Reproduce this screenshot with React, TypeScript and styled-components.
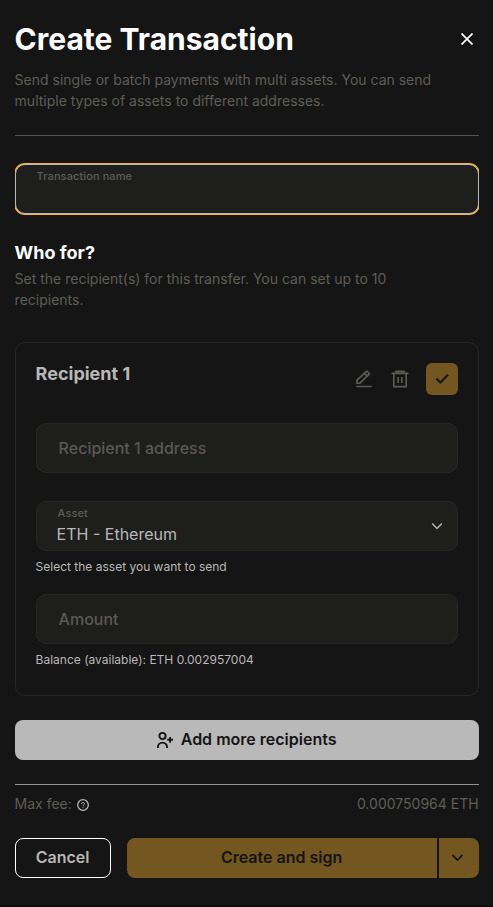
import React from "react";
import styled, { createGlobalStyle, css } from "styled-components";

const GlobalStyle = createGlobalStyle`
  *, *::before, *::after { box-sizing: border-box; }
  body {
    margin: 0;
    background: #100c0e;
    font-family: "Inter", sans-serif;
    -webkit-font-smoothing: antialiased;
  }
  h1, h2, h3, p { margin: 0; }
  button { font-family: inherit; border: 0; padding: 0; cursor: pointer; }
`;

const Drawer = styled.main`
  width: 493px;
  height: 905px;
  padding: 17px 14.4px 0 14.6px;
  background: #151515;
  overflow: hidden;
`;

const Header = styled.header`
  height: 119px;
  border-bottom: 1px solid #535353;
`;

const TitleRow = styled.div`
  display: flex;
  justify-content: space-between;
  align-items: center;
  height: 44px;
`;

const Title = styled.h1`
  font-size: 30px;
  line-height: 44px;
  font-weight: 700;
  color: #fff;
`;

const IconButton = styled.button`
  display: flex;
  align-items: center;
  justify-content: center;
  width: 24px;
  height: 24px;
  background: none;
  color: #5b5b58;
`;

const CloseButton = styled(IconButton)`
  color: #fff;
`;

const Description = styled.p`
  font-size: 14px;
  line-height: 21px;
  color: #5e5d58;
`;

const HeaderDescription = styled(Description)`
  margin-top: 8px;
`;

const FocusFrame = styled.div`
  margin-top: 27px;
  padding: 1px 0;
  overflow: hidden;
`;

const Field = styled.div<{ $focused?: boolean }>`
  position: relative;
  height: 50px;
  border: 1px solid #262626;
  border-radius: 10px;
  background: #1e1e1c;
  ${(p) =>
    p.$focused &&
    css`
      border-color: #b9b9b9;
      box-shadow: 0 0 0 1px #ffb133;
    `}
`;

const FloatingLabel = styled.label<{ $left: number }>`
  position: absolute;
  top: 4px;
  left: ${(p) => p.$left}px;
  font-size: 11px;
  line-height: 14px;
  font-weight: 500;
  letter-spacing: 0.1px;
  color: #5e5d58;
`;

const Placeholder = styled.span`
  display: block;
  padding-left: 22px;
  font-size: 16px;
  font-weight: 500;
  line-height: 49px;
  color: #5a5954;
`;

const SelectValue = styled.div`
  display: flex;
  justify-content: space-between;
  height: 48px;
  padding: 20px 10px 0 20px;
  font-size: 16px;
  line-height: 24px;
  color: #b8b8b8;

  svg { margin-top: -6px; }
`;

const Hint = styled.p`
  margin-top: 7px;
  font-size: 12px;
  line-height: 18px;
  color: #b8b8b8;
`;

const Section = styled.section`
  margin-top: 25px;
`;

const SectionTitle = styled.h2`
  font-size: 18px;
  line-height: 26px;
  font-weight: 700;
  color: #fff;
`;

const SectionDescription = styled(Description)`
  margin-top: 2px;
  width: 400px;
`;

const Card = styled.section`
  height: 354px;
  margin-top: 32px;
  padding: 20px;
  border: 1px solid #262626;
  border-radius: 10px;
`;

const CardHeader = styled.div`
  display: flex;
  justify-content: space-between;
  height: 60px;
`;

const CardTitle = styled.h3`
  font-size: 18px;
  line-height: 22px;
  font-weight: 700;
  color: #b8b8b8;
`;

const Actions = styled.div`
  display: flex;
  align-items: center;
  gap: 12px;
  height: 32px;
`;

const ConfirmButton = styled(IconButton)`
  width: 32px;
  height: 32px;
  margin-left: 2px;
  border-radius: 6px;
  background: #735620;
  color: #151515;
`;

const Fields = styled.div`
  display: flex;
  flex-direction: column;
`;

const FieldGroup = styled.div`
  & + & { margin-top: 28px; }
  & + & + & { margin-top: 18px; }
`;

const Button = styled.button`
  display: flex;
  align-items: center;
  justify-content: center;
  gap: 8px;
  height: 40px;
  padding-bottom: 2px;
  border-radius: 8px;
  font-size: 16px;
  font-weight: 600;
  line-height: 24px;
`;

const AddButton = styled(Button)`
  width: 100%;
  margin-top: 24px;
  background: #b9b9b9;
  color: #151515;

  svg { margin-top: 2px; }
`;

const FeeRow = styled.div`
  display: flex;
  justify-content: space-between;
  height: 54px;
  margin-top: 24px;
  padding-top: 8px;
  border-top: 1px solid #929290;
`;

const FeeLabel = styled(Description)`
  display: flex;
  align-items: center;
  gap: 4px;
  height: 21px;

  svg { margin-top: 2px; color: #b8b8b8; }
`;

const Footer = styled.footer`
  display: flex;
`;

const CancelButton = styled(Button)`
  width: 96px;
  margin-right: 16px;
  border: 1px solid #fff;
  background: transparent;
  color: #b8b8b8;
`;

const SignButton = styled(Button)`
  flex: 1;
  margin-right: 2px;
  border-radius: 8px 0 0 8px;
  background: #735620;
  color: #151515;
`;

const SignMenuButton = styled(Button)`
  width: 40px;
  padding-right: 2px;
  border-radius: 0 8px 8px 0;
  background: #735620;
  color: #151515;
`;

const CloseIcon = () => (
  <svg width="12" height="12" viewBox="0 0 12 12" fill="none" stroke="currentColor" strokeWidth="1.7">
    <path d="M.5.5l11 11M11.5.5l-11 11" />
  </svg>
);

const EditIcon = () => (
  <svg width="20" height="20" viewBox="0 0 20 20" fill="none" stroke="currentColor" strokeWidth="1.65">
    <path d="M3 14.2v-3.1L12.4 2.3a.5.5 0 0 1 .7 0L15.2 4.4a.5.5 0 0 1 0 .7L6 14.2H3zM10.5 4.3l2.7 2.7M2.2 17.5h15.6" />
  </svg>
);

const TrashIcon = () => (
  <svg width="20" height="20" viewBox="0 0 20 20" fill="none" stroke="currentColor" strokeWidth="1.65">
    <path d="M1.7 4.4h16.6M6 4.4V2.4h8v2M3.8 4.4v13.2h12.4V4.4M8.2 8v6M11.8 8v6" />
  </svg>
);

const CheckIcon = () => (
  <svg width="14" height="12" viewBox="0 0 14 12" fill="none" stroke="currentColor" strokeWidth="2">
    <path d="M1.3 5.5l4 4L13 1.8" />
  </svg>
);

const ChevronIcon = ({ size, weight }: { size: number; weight: number }) => (
  <svg width={size} height={size} viewBox="0 0 20 20" fill="none" stroke="currentColor" strokeWidth={weight}>
    <path d="M5.2 7.6l4.8 4.8 4.8-4.8" />
  </svg>
);

const UserAddIcon = () => (
  <svg width="16" height="16" viewBox="0 0 16 16" fill="none" stroke="currentColor" strokeWidth="1.9">
    <circle cx="5.5" cy="4" r="3.1" />
    <path d="M.9 16v-.8a4.6 4.6 0 0 1 9.2 0v.8M10.2 7.8h5.8M13.1 4.9v5.8" />
  </svg>
);

const HelpIcon = () => (
  <svg width="14" height="14" viewBox="0 0 14 14" fill="none" stroke="currentColor" strokeWidth="1.3">
    <circle cx="7" cy="7" r="5.3" />
    <path strokeWidth="1" d="M5.6 6A1.4 1.4 0 1 1 7.6 7.1Q7 7.4 7 8M7 8.7v1" />
  </svg>
);

export default function App() {
  return (
    <>
      <GlobalStyle />
      <Drawer>
        <Header>
          <TitleRow>
            <Title>Create Transaction</Title>
            <CloseButton aria-label="Close"><CloseIcon /></CloseButton>
          </TitleRow>
          <HeaderDescription>
            Send single or batch payments with multi assets. You can send<br />
            multiple types of assets to different addresses.
          </HeaderDescription>
        </Header>

        <FocusFrame>
          <Field $focused>
            <FloatingLabel $left={21}>Transaction name</FloatingLabel>
          </Field>
        </FocusFrame>

        <Section>
          <SectionTitle>Who for?</SectionTitle>
          <SectionDescription>
            Set the recipient(s) for this transfer. You can set up to 10<br />
            recipients.
          </SectionDescription>
        </Section>

        <Card>
          <CardHeader>
            <CardTitle>Recipient 1</CardTitle>
            <Actions>
              <IconButton aria-label="Edit"><EditIcon /></IconButton>
              <IconButton aria-label="Delete"><TrashIcon /></IconButton>
              <ConfirmButton aria-label="Confirm"><CheckIcon /></ConfirmButton>
            </Actions>
          </CardHeader>
          <Fields>
            <FieldGroup>
              <Field><Placeholder>Recipient 1 address</Placeholder></Field>
            </FieldGroup>
            <FieldGroup>
              <Field>
                <FloatingLabel $left={21}>Asset</FloatingLabel>
                <SelectValue>
                  ETH - Ethereum
                  <ChevronIcon size={20} weight={1.4} />
                </SelectValue>
              </Field>
              <Hint>Select the asset you want to send</Hint>
            </FieldGroup>
            <FieldGroup>
              <Field><Placeholder>Amount</Placeholder></Field>
              <Hint>Balance (available): ETH 0.002957004</Hint>
            </FieldGroup>
          </Fields>
        </Card>

        <AddButton><UserAddIcon />Add more recipients</AddButton>

        <FeeRow>
          <FeeLabel>Max fee: <HelpIcon /></FeeLabel>
          <Description>0.000750964 ETH</Description>
        </FeeRow>

        <Footer>
          <CancelButton>Cancel</CancelButton>
          <SignButton>Create and sign</SignButton>
          <SignMenuButton aria-label="More options"><ChevronIcon size={21} weight={1.7} /></SignMenuButton>
        </Footer>
      </Drawer>
    </>
  );
}
